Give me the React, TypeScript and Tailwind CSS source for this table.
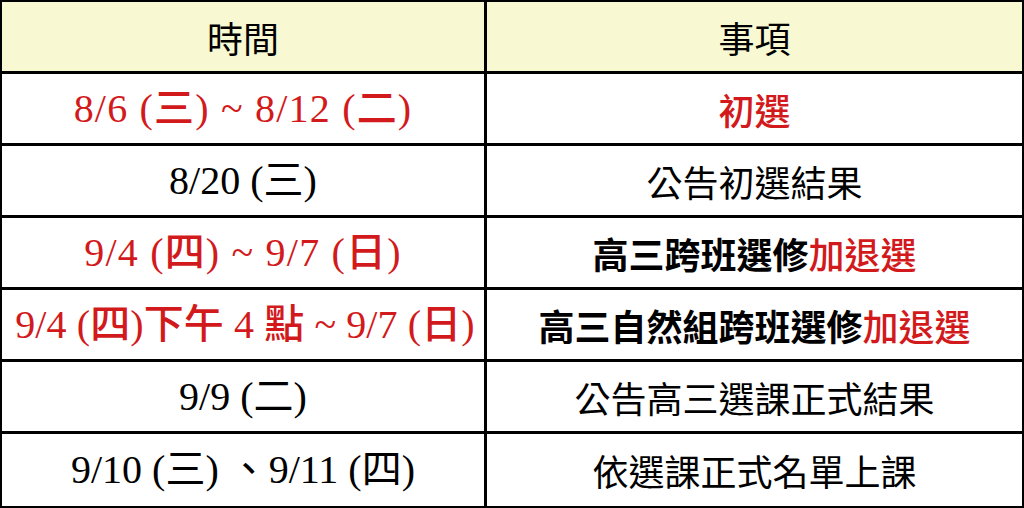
import React from "react";

const RED = "text-[#d21a1c]";

type Row = { left: React.ReactNode; right: React.ReactNode };

const serif = "font-['Liberation_Serif','Noto_Sans_CJK_TC',serif]";
const sans = "font-['Noto_Sans_CJK_TC',sans-serif]";

export default function App() {
  const rows: Row[] = [
    {
      left: <span className={`${RED} font-medium tracking-[1.2px]`}>8/6 (三) ~ 8/12 (二)</span>,
      right: <span className={`${RED} font-medium`}>初選</span>,
    },
    {
      left: <span>8/20 (三)</span>,
      right: <span>公告初選結果</span>,
    },
    {
      left: <span className={`${RED} font-medium tracking-[1.2px]`}>9/4 (四) ~ 9/7 (日)</span>,
      right: (
        <span className="font-bold">
          高三跨班選修<span className={`${RED} font-medium`}>加退選</span>
        </span>
      ),
    },
    {
      left: <span className={`${RED} font-medium tracking-[0.1px] pl-[4px]`}>9/4 (四)下午 4 點 ~ 9/7 (日)</span>,
      right: (
        <span className="font-bold">
          高三自然組跨班選修<span className={`${RED} font-medium`}>加退選</span>
        </span>
      ),
    },
    {
      left: <span>9/9 (二)</span>,
      right: <span>公告高三選課正式結果</span>,
    },
    {
      left: <span>9/10 (三) 、9/11 (四)</span>,
      right: <span>依選課正式名單上課</span>,
    },
  ];

  return (
    <div className="w-[1024px] h-[508px] bg-white border-2 border-black text-black">
      <div className="grid grid-cols-[485px_1fr] grid-rows-[72px_72px_72px_72px_72px_72px_72px] h-full">
        <div className={`bg-[#f8f8d3] border-r-[3px] border-b-[3px] border-black flex items-center justify-center text-[36px] ${sans}`}>
          時間
        </div>
        <div className={`bg-[#f8f8d3] border-b-[3px] border-black flex items-center justify-center text-[36px] ${sans}`}>
          事項
        </div>
        {rows.map((r, i) => {
          const last = i === rows.length - 1;
          return (
            <React.Fragment key={i}>
              <div
                className={`border-r-[3px] ${last ? "" : "border-b-[3px]"} border-black flex items-center justify-center whitespace-nowrap text-[40px] leading-none ${serif}`}
              >
                {r.left}
              </div>
              <div
                className={`${last ? "" : "border-b-[3px]"} border-black flex items-center justify-center whitespace-nowrap text-[36px] leading-none ${sans}`}
              >
                {r.right}
              </div>
            </React.Fragment>
          );
        })}
      </div>
    </div>
  );
}
